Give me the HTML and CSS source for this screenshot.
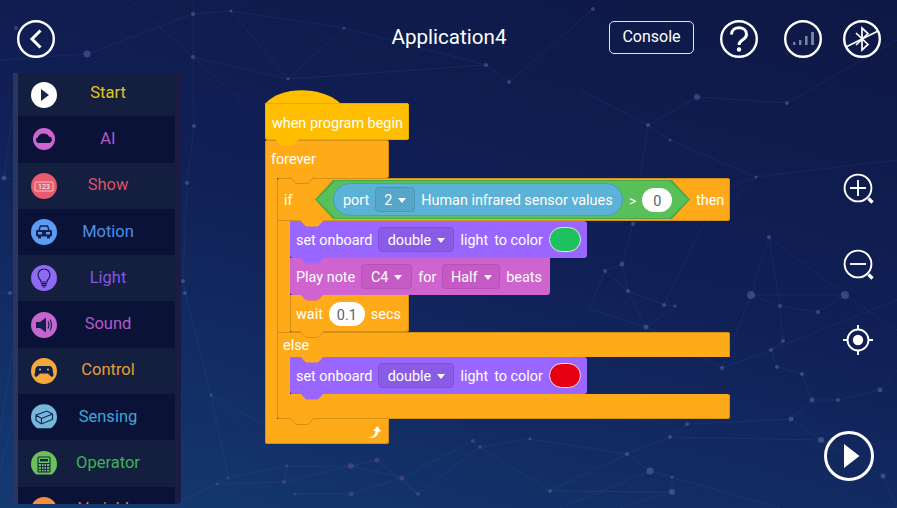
FILE: index.html
```html
<!DOCTYPE html>
<html lang="en">

<head>
    <meta charset="UTF-8">
    <meta name="viewport" content="width=device-width, initial-scale=1.0">
    <title>Application4</title>
    <link rel="stylesheet" href="styles.css">
</head>
<body>
    <svg width="0" height="0" class="defs">
        <symbol id="bump" viewBox="0 0 24 7"><path d="M0 0 L5 5.5 Q6 6.5 7.5 6.5 H16.5 Q18 6.5 19 5.5 L24 0"/></symbol>
    </svg>

    <svg class="backdrop" viewBox="0 0 897 508">
        <g class="net">
            <path d="M193 0 V14 L193 57 L194 126 L187 183 L183 281 L185 293 L211 395 L228 478 L217 484"/>
            <path d="M0 60 L87 54 L193 14 L231 11 L344 28 L486 65 L509 82 L593 9"/>
            <path d="M193 57 L288 79 L344 28 M231 11 L288 79 L486 65 M130 0 L193 57 L240 100"/>
            <path d="M0 178 L187 183 M0 293 L183 281 M4 178 L13 110"/>
            <path d="M648 125 L697 97 L787 103 L897 40 M648 125 L670 140 L756 177 L897 160"/>
            <path d="M580 90 L648 125 L633 224 L622 264 L605 271 L628 291 L664 305 L675 306 L646 327"/>
            <path d="M756 177 L633 224 M756 177 L700 230 L664 305 M769 237 L751 295 L780 306 L818 312 L845 295"/>
            <path d="M769 237 L780 306 L783 341 L771 350 L777 367 L802 374 M769 237 L845 295 L897 330 M751 295 L845 295"/>
            <path d="M605 271 L589 309 L646 327 L722 368 L771 350 L897 300 M622 264 L628 291 L646 327 M751 295 L722 368"/>
            <path d="M802 374 L812 400 L838 400 L880 390 L897 370 M791 419 L812 400 M791 419 L687 424 L670 437 L627 454 L650 471 L672 477 L672 492 L620 508"/>
            <path d="M821 440 L791 419 M821 440 L883 476 L897 508 M821 440 L670 437 M627 454 L530 439 L480 447 L473 441 L402 478 L351 494 L295 494"/>
            <path d="M550 491 L480 447 L418 494 L377 460 L351 466 L287 466 L228 478 M550 491 L627 454 M550 491 L672 492 M284 482 L351 466 L402 478 L418 494"/>
            <path d="M211 395 L287 466 L284 482 L217 484 L181 500 M211 395 L300 445 M672 477 L780 508 M650 471 L560 508"/>
            <path d="M0 430 L13 350 M0 470 L13 420"/>
        </g>
        <g class="dots">
            <circle cx="87" cy="54" r="3.5"/>
            <circle cx="16" cy="28" r="2"/>
            <circle cx="193" cy="14" r="2"/>
            <circle cx="231" cy="11" r="1.5"/>
            <circle cx="193" cy="57" r="2"/>
            <circle cx="344" cy="28" r="1.5"/>
            <circle cx="288" cy="79" r="1.5"/>
            <circle cx="486" cy="65" r="2"/>
            <circle cx="509" cy="82" r="2"/>
            <circle cx="593" cy="9" r="2"/>
            <circle cx="194" cy="126" r="2"/>
            <circle cx="187" cy="183" r="2"/>
            <circle cx="4" cy="178" r="2.5"/>
            <circle cx="183" cy="281" r="2"/>
            <circle cx="185" cy="293" r="2"/>
            <circle cx="10" cy="293" r="2"/>
            <circle cx="697" cy="97" r="3"/>
            <circle cx="787" cy="103" r="2"/>
            <circle cx="648" cy="125" r="2"/>
            <circle cx="670" cy="140" r="1.5"/>
            <circle cx="756" cy="177" r="1.5"/>
            <circle cx="769" cy="237" r="2"/>
            <circle cx="751" cy="295" r="4"/>
            <circle cx="845" cy="295" r="4"/>
            <circle cx="780" cy="306" r="2"/>
            <circle cx="818" cy="312" r="2"/>
            <circle cx="622" cy="264" r="2.5"/>
            <circle cx="605" cy="271" r="2"/>
            <circle cx="628" cy="291" r="2"/>
            <circle cx="664" cy="305" r="2"/>
            <circle cx="675" cy="306" r="1.5"/>
            <circle cx="646" cy="327" r="2.5"/>
            <circle cx="633" cy="224" r="2"/>
            <circle cx="783" cy="341" r="2"/>
            <circle cx="771" cy="350" r="2"/>
            <circle cx="777" cy="367" r="2"/>
            <circle cx="802" cy="374" r="2"/>
            <circle cx="722" cy="368" r="2"/>
            <circle cx="211" cy="395" r="1.5"/>
            <circle cx="880" cy="390" r="2.5"/>
            <circle cx="812" cy="400" r="2.5"/>
            <circle cx="838" cy="400" r="2"/>
            <circle cx="791" cy="419" r="2.5"/>
            <circle cx="687" cy="424" r="2"/>
            <circle cx="670" cy="437" r="2"/>
            <circle cx="627" cy="454" r="2"/>
            <circle cx="650" cy="471" r="3.5"/>
            <circle cx="672" cy="477" r="1.5"/>
            <circle cx="672" cy="492" r="3"/>
            <circle cx="550" cy="491" r="2"/>
            <circle cx="821" cy="440" r="3"/>
            <circle cx="883" cy="476" r="2.5"/>
            <circle cx="530" cy="439" r="1.5"/>
        </g>
        <g class="dots dots-warm">
            <circle cx="480" cy="447" r="2"/>
            <circle cx="473" cy="441" r="2"/>
            <circle cx="351" cy="466" r="3"/>
            <circle cx="377" cy="460" r="2.5"/>
            <circle cx="402" cy="478" r="2.5"/>
            <circle cx="351" cy="494" r="2.5"/>
            <circle cx="418" cy="494" r="2"/>
            <circle cx="287" cy="466" r="1.5"/>
            <circle cx="284" cy="482" r="2"/>
            <circle cx="228" cy="478" r="1.5"/>
            <circle cx="217" cy="484" r="1.5"/>
            <circle cx="295" cy="494" r="1.5"/>
        </g>
    </svg>

    <header class="topbar">
        <div class="topbar-left">
            <svg class="round-btn back-btn" viewBox="0 0 38 38">
                <circle cx="19" cy="19" r="17.8"/>
                <path d="M23.5 10.5 L15 19 L23.5 27.5"/>
            </svg>
        </div>
        <h1 class="title">Application4</h1>
        <div class="topbar-right">
            <div class="console-btn">Console</div>
            <svg class="round-btn help-btn" viewBox="0 0 38 38">
                <circle cx="19" cy="19" r="17.8"/>
                <path d="M11.5 14.5 C11.5 5.5 26.5 5.5 26.5 14.5 C26.5 20 19 19.5 19 25"/>
                <circle class="solid" cx="19" cy="29.5" r="2.2"/>
            </svg>
            <svg class="round-btn" viewBox="0 0 38 38">
                <circle cx="19" cy="19" r="17.8"/>
                <g class="signal">
                    <rect x="9" y="22" width="2.4" height="3"/>
                    <rect x="15" y="20" width="2.4" height="5"/>
                    <rect x="21" y="16" width="2.6" height="9"/>
                    <rect x="27" y="12" width="3" height="13"/>
                </g>
            </svg>
            <svg class="round-btn bt-btn" viewBox="0 0 38 38">
                <circle cx="19" cy="19" r="17.8"/>
                <path class="thin" d="M13 13 L25 24.5 L19 30 V8 L25 13.5 L13 25"/>
                <path class="thin" d="M3 27 L35 11"/>
            </svg>
        </div>
    </header>

    <main class="main">
        <nav class="sidebar">
            <div class="cat cat-start">
                <svg class="cat-icon" viewBox="0 0 26 26"><circle cx="13" cy="13" r="13" fill="#fff"/><path d="M10 7 L18 13 L10 19Z" fill="#1b2547"/></svg>
                <span class="cat-label">Start</span>
            </div>
            <div class="cat cat-ai">
                <svg class="cat-icon" viewBox="0 0 26 26"><circle cx="13" cy="13" r="11" fill="#cf63cf"/><path d="M7 17 a3.2 3.2 0 0 1 0 -6 a6 5.5 0 0 1 11 -.5 a3.4 3.4 0 0 1 1 6.5Z" fill="#0b1339"/></svg>
                <span class="cat-label">AI</span>
            </div>
            <div class="cat cat-show">
                <svg class="cat-icon" viewBox="0 0 26 26"><circle cx="13" cy="13" r="13" fill="#e85a6c"/><rect x="4" y="9" width="18" height="9" rx="1" fill="none" stroke="#fff" stroke-opacity=".8" stroke-width=".8"/><text x="13" y="16" class="icon-text">123</text></svg>
                <span class="cat-label">Show</span>
            </div>
            <div class="cat cat-motion">
                <svg class="cat-icon" viewBox="0 0 26 26"><circle cx="13" cy="13" r="13" fill="#5b9cf5"/><path d="M8 11 L9.5 7 H16.5 L18 11" fill="none" stroke="#14204c" stroke-width="1.4"/><rect x="5" y="11" width="16" height="6.5" rx="1.2" fill="#14204c"/><rect x="7" y="13" width="4" height="2.4" fill="#5b9cf5"/><rect x="15" y="13" width="4" height="2.4" fill="#5b9cf5"/><rect x="7" y="17" width="3" height="2.5" fill="#14204c"/><rect x="16" y="17" width="3" height="2.5" fill="#14204c"/></svg>
                <span class="cat-label">Motion</span>
            </div>
            <div class="cat cat-light">
                <svg class="cat-icon" viewBox="0 0 26 26"><circle cx="13" cy="13" r="13" fill="#9069f5"/><path d="M10 17 C10 14 7 13.5 7 10 A6 6 0 0 1 19 10 C19 13.5 16 14 16 17Z" fill="none" stroke="#14204c" stroke-width="1.2"/><path d="M10 18.6 H16 M10.5 20.4 H15.5 M11.5 22 H14.5" stroke="#14204c" stroke-width="1.2"/></svg>
                <span class="cat-label">Light</span>
            </div>
            <div class="cat cat-sound">
                <svg class="cat-icon" viewBox="0 0 26 26"><circle cx="13" cy="13" r="13" fill="#c565cf"/><path d="M5 10 H9 L15 5.5 V20.5 L9 16 H5Z" fill="#14204c"/><path d="M17 9.5 Q19 13 17 16.5 M19 7.5 Q22 13 19 18.5" fill="none" stroke="#14204c" stroke-width="1.1"/></svg>
                <span class="cat-label">Sound</span>
            </div>
            <div class="cat cat-control">
                <svg class="cat-icon" viewBox="0 0 26 26"><circle cx="13" cy="13" r="13" fill="#f5a93a"/><path d="M8 8 H18 Q21 8 21.5 11 L22.5 17 Q22.5 19.5 20 18.5 L17 15.5 H9 L6 18.5 Q3.5 19.5 3.5 17 L4.5 11 Q5 8 8 8Z" fill="#14204c"/><circle cx="9" cy="11.5" r="1.1" fill="#f5a93a"/><circle cx="17" cy="11.5" r="1.1" fill="#f5a93a"/></svg>
                <span class="cat-label">Control</span>
            </div>
            <div class="cat cat-sensing">
                <svg class="cat-icon icon-cut" viewBox="0 0 26 26"><circle cx="13" cy="13" r="13" fill="#74b8dc"/><path d="M5 11 L16 7 L21.5 10 L21.5 15.5 L10.5 20 L5 16.5Z M5 11 L10.5 14.5 L21.5 10 M10.5 14.5 V20" fill="none" stroke="#14204c" stroke-width="1.1"/></svg>
                <span class="cat-label">Sensing</span>
            </div>
            <div class="cat cat-operator">
                <svg class="cat-icon icon-cut" viewBox="0 0 26 26"><circle cx="13" cy="13" r="13" fill="#6cc05c"/><rect x="7" y="6" width="12" height="15" rx="1" fill="none" stroke="#14204c" stroke-width="1.1"/><rect x="9" y="8" width="8" height="2.4" fill="#14204c"/><path d="M7 12.5 H19 M7 15.5 H19 M7 18.3 H19 M10.5 12 V21 M13 12 V21 M15.5 12 V21" stroke="#14204c" stroke-width=".9"/></svg>
                <span class="cat-label">Operator</span>
            </div>
            <div class="cat cat-variable">
                <svg class="cat-icon" viewBox="0 0 26 26"><circle cx="13" cy="13" r="13" fill="#f58f3a"/></svg>
                <span class="cat-label">Variable</span>
            </div>
        </nav>

        <section class="workspace">
            <div class="script">
                <svg class="hat-dome" viewBox="0 0 75 14"><path d="M0 14 C15 -4 56 -4 75 13 V14Z"/></svg>
                <div class="block hat">
                    <span>when program begin</span>
                    <svg class="bump bump-hat"><use href="#bump"/></svg>
                </div>

                <div class="cblock">
                    <div class="block ctrl forever-head">
                        <span>forever</span>
                        <svg class="bump bump-ctrl bump-forever"><use href="#bump"/></svg>
                    </div>
                    <div class="c-body">
                        <div class="arm arm-forever"></div>
                        <div class="cblock">
                            <div class="block ctrl if-head">
                                <span class="if-word">if</span>
                                <div class="hex">
                                    <div class="pill-reporter">
                                        <span>port</span>
                                        <span class="drop drop-blue">2<i class="caret"></i></span>
                                        <span>Human infrared sensor values</span>
                                    </div>
                                    <span class="gt">&gt;</span>
                                    <span class="val val-zero">0</span>
                                </div>
                                <span class="then">then</span>
                                <svg class="bump bump-fill bump-if"><use href="#bump"/></svg>
                            </div>
                            <div class="c-body">
                                <div class="arm"></div>
                                <div class="stack">
                                    <div class="block look">
                                        <span>set onboard</span>
                                        <span class="drop drop-purple">double<i class="caret"></i></span>
                                        <span>light</span>
                                        <span>to color</span>
                                        <span class="swatch swatch-green"></span>
                                        <svg class="bump bump-look"><use href="#bump"/></svg>
                                    </div>
                                    <div class="block sound">
                                        <span>Play note</span>
                                        <span class="drop drop-pink drop-note">C4<i class="caret"></i></span>
                                        <span>for</span>
                                        <span class="drop drop-pink drop-beat">Half<i class="caret"></i></span>
                                        <span>beats</span>
                                        <svg class="bump bump-sound"><use href="#bump"/></svg>
                                    </div>
                                    <div class="block ctrl wait">
                                        <span>wait</span>
                                        <span class="val val-wait">0.1</span>
                                        <span>secs</span>
                                        <svg class="bump bump-ctrl bump-wait"><use href="#bump"/></svg>
                                    </div>
                                </div>
                            </div>
                            <div class="block ctrl else-row">
                                <span>else</span>
                                <svg class="bump bump-fill bump-if"><use href="#bump"/></svg>
                            </div>
                            <div class="c-body">
                                <div class="arm"></div>
                                <div class="stack">
                                    <div class="block look">
                                        <span>set onboard</span>
                                        <span class="drop drop-purple">double<i class="caret"></i></span>
                                        <span>light</span>
                                        <span>to color</span>
                                        <span class="swatch swatch-red"></span>
                                        <svg class="bump bump-look"><use href="#bump"/></svg>
                                    </div>
                                </div>
                            </div>
                            <div class="block ctrl if-foot">
                                <svg class="bump bump-ctrl bump-iffoot"><use href="#bump"/></svg>
                            </div>
                        </div>
                    </div>
                    <div class="block ctrl forever-foot">
                        <svg class="loop-arrow" viewBox="0 0 16 14"><path d="M1 12 C6 13 9 11 9.5 6 L7 6 L11.5 1 L15 6.5 L12.5 6.5 C12 11 8 14.5 1 12Z"/></svg>
                    </div>
                </div>
            </div>
        </section>

        <aside class="tools">
            <svg class="tool" viewBox="0 0 34 34">
                <circle cx="17" cy="17" r="13.4"/>
                <path d="M17 9 V25 M9 17 H25"/>
                <path class="handle" d="M27.5 27.5 L31.5 31.5"/>
            </svg>
            <svg class="tool" viewBox="0 0 34 34">
                <circle cx="17" cy="17" r="13.4"/>
                <path d="M9 17 H25"/>
                <path class="handle" d="M27.5 27.5 L31.5 31.5"/>
            </svg>
            <svg class="tool" viewBox="0 0 34 34">
                <circle cx="17" cy="17" r="10.5"/>
                <circle class="solid" cx="17" cy="17" r="5.2"/>
                <path d="M17 2 V6 M17 28 V32 M2 17 H6 M28 17 H32"/>
            </svg>
            <svg class="run-btn" viewBox="0 0 50 50">
                <circle cx="25" cy="25" r="23.5"/>
                <path class="solid" d="M20 13 L35.5 25 L20 37Z"/>
            </svg>
        </aside>
    </main>
</body>

</html>
```

FILE: styles.css
```css
* {
    box-sizing: border-box;
}

body {
    font-family: Roboto, "Liberation Sans", sans-serif;
    background: linear-gradient(195deg, #0e1845 0%, #101f55 45%, #143a72 100%);
    color: #fff;
    margin: 0;
    width: 897px;
    height: 508px;
    overflow: hidden;
    position: relative;
}

.defs {
    position: absolute;
}

.backdrop {
    position: absolute;
    left: 0;
    top: 0;
    width: 897px;
    height: 508px;
}

.net path {
    fill: none;
    stroke: #6a86cc;
    stroke-opacity: .1;
    stroke-width: 1;
}

.dots circle {
    fill: #8291c6;
    fill-opacity: .34;
}

.dots-warm circle {
    fill: #8f5f92;
}

/* top bar */
.topbar {
    position: relative;
    height: 73px;
    display: grid;
    grid-template-columns: 1fr auto 1fr;
    padding: 20px 16px 0 17px;
}

.title {
    margin: 0;
    font-size: 20.6px;
    font-weight: 400;
    line-height: 34px;
    color: #fff;
}

.topbar-right {
    display: flex;
    justify-content: flex-end;
    align-items: flex-start;
    gap: 26px;
}

.round-btn {
    width: 38px;
    height: 38px;
    display: block;
}

.round-btn circle,
.round-btn path {
    fill: none;
    stroke: #fff;
    stroke-width: 2.4;
}

.back-btn path,
.help-btn path {
    stroke-width: 3;
}

.round-btn .solid {
    fill: #fff;
    stroke: none;
}

.round-btn .thin {
    stroke-width: 1.7;
}

.signal rect {
    fill: #75829f;
}

.bt-btn {
    margin-left: -5px;
}

.console-btn {
    width: 85px;
    height: 33px;
    margin-top: 1px;
    border: 1.5px solid #e4e7f0;
    border-radius: 5px;
    font-size: 16px;
    line-height: 30px;
    text-align: center;
}

/* layout */
.main {
    position: relative;
    display: flex;
    height: 435px;
}

.sidebar {
    width: 168px;
    height: 431px;
    margin-left: 13px;
    overflow: hidden;
    background: #1b1d47;
    border-left: 5px solid #2a3562;
    border-right: 6px solid #1a1c44;
    border-radius: 0 0 4px 0;
}

.cat {
    display: flex;
    align-items: center;
    height: 46.3px;
    padding: 0 16px 0 13px;
}

.cat:first-child {
    height: 43.3px;
}

.cat:nth-child(odd) {
    background: #141e3f;
}

.cat:nth-child(even) {
    background: #0a1238;
}

.cat-icon {
    width: 26px;
    height: 26px;
    flex: none;
}

.icon-cut {
    clip-path: inset(0 0 2px 0);
}

.cat-label {
    flex: 1;
    padding-bottom: 2px;
    font-size: 16.5px;
    text-align: center;
    white-space: nowrap;
}

.icon-text {
    font-size: 7px;
    fill: #fff;
    text-anchor: middle;
}

.cat-start .cat-label { color: #e3c61c; padding-bottom: 4px; }
.cat-ai .cat-label { color: #b657c9; }
.cat-show .cat-label { color: #d9526c; }
.cat-motion .cat-label { color: #4a90e6; }
.cat-light .cat-label { color: #7f5ae6; }
.cat-sound .cat-label { color: #b45ac8; }
.cat-control .cat-label { color: #e6a030; }
.cat-sensing .cat-label { color: #3fa6d8; }
.cat-operator .cat-label { color: #3db45a; }
.cat-variable .cat-label { color: #e88a30; }

/* blocks */
.workspace {
    flex: 1;
    position: relative;
}

.script {
    position: absolute;
    left: 84px;
    top: 17px;
    font-size: 14.4px;
    width: 470px;
}

.hat-dome {
    display: block;
    width: 75px;
    height: 14px;
    margin-bottom: -1px;
    fill: #ffbf00;
}

.block {
    position: relative;
    display: flex;
    align-items: center;
    gap: 6px;
    padding: 0 6px;
    white-space: nowrap;
    color: #fff;
    border-radius: 3px;
}

.block > span {
    flex: none;
}

/* text sits a pixel low in the block row */
.look > span,
.sound > span,
.wait > span,
.if-head span {
    padding-top: 2px;
}

.bump {
    position: absolute;
    left: 10px;
    bottom: -6px;
    width: 24px;
    height: 7px;
    z-index: 2;
    overflow: visible;
}

.hat {
    width: 144px;
    height: 37px;
    padding: 4px 6px 0 7px;
    background: #ffbf00;
    box-shadow: inset 0 0 0 1px #e6ad00;
    border-top-left-radius: 0;
}

.bump-hat { fill: #ffbf00; }

.ctrl {
    background: #ffab19;
}

.bump-ctrl {
    fill: #ffab19;
    stroke: #d58e16;
    stroke-width: 1;
}

.bump-fill {
    fill: #ffab19;
}

.forever-head {
    width: 124px;
    height: 38px;
    box-shadow: inset 0 1px 0 #d58e16, inset -1px 0 0 #d58e16, inset 1px 0 0 #d58e16;
    border-radius: 3px 3px 3px 0;
}

.bump-forever {
    left: 25px;
}

.if-head {
    width: 453px;
    height: 43px;
    gap: 0;
    box-shadow: inset 0 0 0 1px #d58e16;
    border-bottom-left-radius: 0;
}

.bump-if {
    left: 23px;
}

.if-word {
    width: 32px;
    padding-left: 1px;
}

.then {
    margin-left: 6px;
}

.hex {
    position: relative;
    isolation: isolate;
    display: flex;
    align-items: center;
    flex: none;
    gap: 6px;
    width: 375px;
    height: 39px;
    padding: 0 17px 0 18px;
    background: #4aa84a;
    clip-path: polygon(0 50%, 18px 0, calc(100% - 18px) 0, 100% 50%, calc(100% - 18px) 100%, 18px 100%);
}

.hex::before {
    content: "";
    position: absolute;
    inset: 1px 2px;
    z-index: -1;
    background: #59c059;
    clip-path: polygon(0 50%, 18px 0, calc(100% - 18px) 0, 100% 50%, calc(100% - 18px) 100%, 18px 100%);
}

.pill-reporter {
    display: flex;
    align-items: center;
    flex: none;
    gap: 6px;
    width: 290px;
    height: 33px;
    padding: 0 9px;
    background: #5cb1d6;
    border: 1px solid #4a9cc0;
    border-radius: 17px;
}

.gt {
    font-size: 14px;
}

.val {
    background: #fff;
    color: #575e75;
    text-align: center;
    border-radius: 12px;
    height: 24px;
    line-height: 24px;
    width: 30px;
    flex: none;
}

.val-wait {
    width: 36px;
}

.drop {
    display: flex;
    align-items: center;
    justify-content: center;
    flex: none;
    gap: 6px;
    height: 25px;
    border-radius: 4px;
}

.drop-blue {
    width: 40px;
    background: #55a6c9;
    border: 1px solid #4a97b8;
}

.drop-purple {
    width: 76px;
    background: #8a5ce6;
    border: 1px solid #7d52d6;
}

.drop-pink {
    background: #c55ac5;
    border: 1px solid #b552b5;
}

.drop-note {
    width: 51px;
}

.drop-beat {
    width: 58px;
}

.caret {
    width: 0;
    height: 0;
    border-left: 4.5px solid transparent;
    border-right: 4.5px solid transparent;
    border-top: 5px solid #fff;
}

.swatch {
    width: 32px;
    height: 25px;
    border-radius: 13px;
    border: 1.5px solid #e6e0f5;
    flex: none;
}

.swatch-green { background: #1fc15f; }
.swatch-red { background: #e60012; }

.cblock {
    display: flex;
    flex-direction: column;
    align-items: flex-start;
}

.c-body {
    display: flex;
}

.arm {
    width: 13px;
    background: #ffab19;
    box-shadow: inset 1px 0 0 #d58e16;
}

.arm-forever {
    width: 12px;
    box-shadow: inset 1px 0 0 #d58e16;
}

.stack {
    display: flex;
    flex-direction: column;
}

.look {
    width: 297px;
    height: 37px;
    background: #9966ff;
    border-radius: 0 3px 3px 3px;
}

.bump-look { fill: #9966ff; }

.sound {
    width: 260px;
    height: 37px;
    background: #cf63cf;
    border-radius: 0 0 3px 3px;
}

.bump-sound { fill: #cf63cf; }

.wait {
    width: 119px;
    height: 37px;
    border-radius: 0 0 3px 3px;
    box-shadow: inset -1px -1px 0 #d58e16, inset 1px 0 0 #d58e16;
}

.else-row {
    width: 453px;
    height: 25px;
    padding-top: 1px;
    border-radius: 0 3px 0 0;
    box-shadow: inset 1px 0 0 #d58e16, inset -1px 0 0 #d58e16, inset 0 1px 0 #d58e16;
}

.if-foot {
    width: 453px;
    height: 25px;
    border-radius: 0 3px 3px 3px;
    box-shadow: inset -1px -1px 0 #d58e16, inset 1px 0 0 #d58e16;
}

.bump-iffoot {
    left: 13px;
}

.forever-foot {
    width: 124px;
    height: 25px;
    border-radius: 0 0 3px 3px;
    justify-content: flex-end;
    padding-right: 7px;
    box-shadow: inset -1px -1px 0 #d58e16, inset 1px 0 0 #d58e16;
}

.loop-arrow {
    width: 16px;
    height: 14px;
    fill: #fff;
}

/* right side tools */
.tools {
    display: flex;
    flex-direction: column;
    align-items: center;
    gap: 42px;
    width: 78px;
    padding-top: 98px;
    margin-left: auto;
}

.tool {
    width: 34px;
    height: 34px;
    flex: none;
    overflow: visible;
}

.tool circle,
.tool path {
    fill: none;
    stroke: #fff;
    stroke-width: 1.9;
}

.tool .handle {
    stroke-width: 3.4;
}

.tool .solid {
    fill: #fff;
    stroke: none;
}

.run-btn {
    width: 50px;
    height: 50px;
    flex: none;
    margin-top: 32px;
    margin-right: 18px;
}

.run-btn circle {
    fill: none;
    stroke: #fff;
    stroke-width: 3;
}

.run-btn .solid {
    fill: #fff;
}
```
